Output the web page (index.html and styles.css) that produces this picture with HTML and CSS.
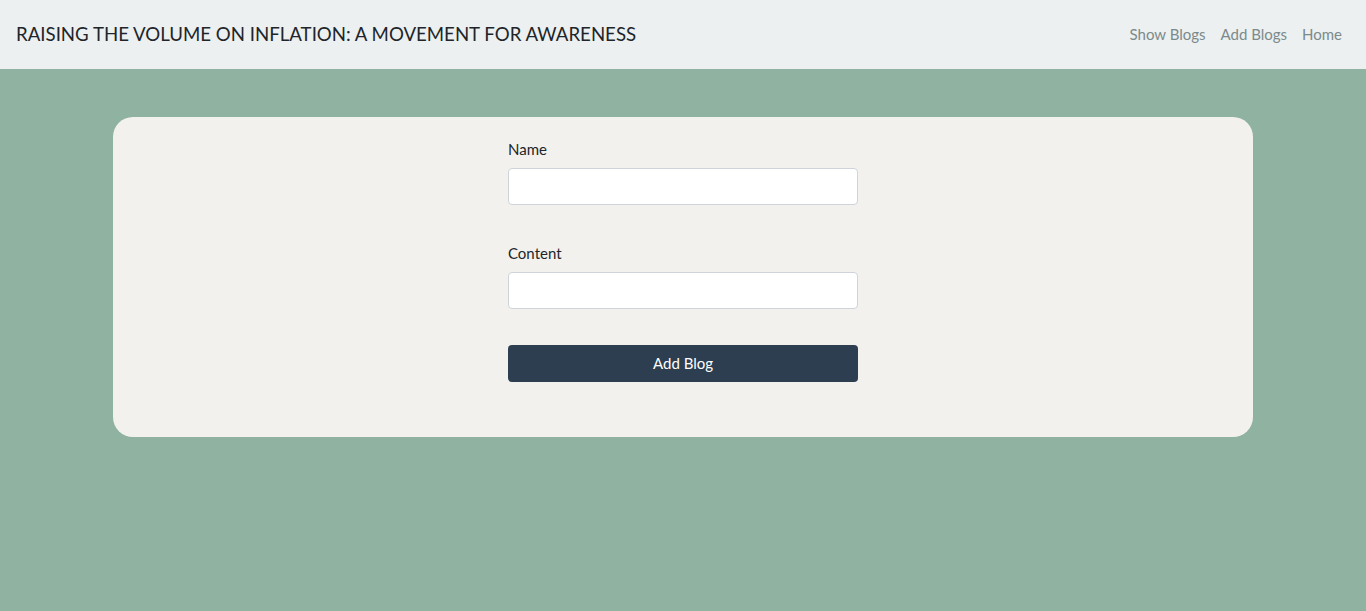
FILE: index.html
```html
<!DOCTYPE html>
<html>
<head>
<meta charset="utf-8">
<link rel="stylesheet" href="styles.css">
</head>
<body>
<header class="navbar">
  <div class="brand">RAISING THE VOLUME ON INFLATION: A MOVEMENT FOR AWARENESS</div>
  <nav class="nav">
    <a href="#">Show Blogs</a>
    <a href="#">Add Blogs</a>
    <a href="#">Home</a>
  </nav>
</header>
<main class="main">
  <section class="card">
    <form class="form">
      <div class="field">
        <label>Name</label>
        <input type="text">
      </div>
      <div class="field">
        <label>Content</label>
        <input type="text">
      </div>
      <button type="button" class="btn">Add Blog</button>
    </form>
  </section>
</main>
</body>
</html>
```

FILE: styles.css
```css
* { box-sizing: border-box; }
html, body { margin: 0; padding: 0; }
body {
  font-family: Lato, "Open Sans", sans-serif;
  background: #8fb2a1;
  min-height: 611px;
  color: #212529;
}
.navbar {
  height: 69px;
  background: #ecf0f1;
  display: flex;
  align-items: center;
  justify-content: space-between;
  padding: 0 24px 2px 16px;
}
.brand {
  font-size: 18.65px;
  color: #212529;
}
.nav {
  display: flex;
  gap: 15px;
}
.nav a {
  font-size: 15px;
  color: #7b8a8b;
  text-decoration: none;
}
.main {
  padding: 48px 113px;
}
.card {
  background: #f3f1ee;
  border-radius: 20px;
  height: 320px;
  display: flex;
  justify-content: center;
  padding-top: 21px;
}
.form {
  width: 350px;
  display: flex;
  flex-direction: column;
}
.field {
  display: flex;
  flex-direction: column;
  margin-bottom: 37px;
}
.field + .field {
  margin-bottom: 36px;
}
.field label {
  font-size: 15px;
  line-height: 22px;
  margin-bottom: 8px;
}
.field input {
  height: 37px;
  border: 1px solid #ced4da;
  border-radius: 4px;
  background: #fff;
  font-family: inherit;
  font-size: 15px;
  padding: 6px 12px;
}
.btn {
  height: 37px;
  background: #2c3e50;
  color: #fff;
  border: none;
  border-radius: 4px;
  font-family: inherit;
  font-size: 15px;
  padding: 0 0 2px;
}
```
